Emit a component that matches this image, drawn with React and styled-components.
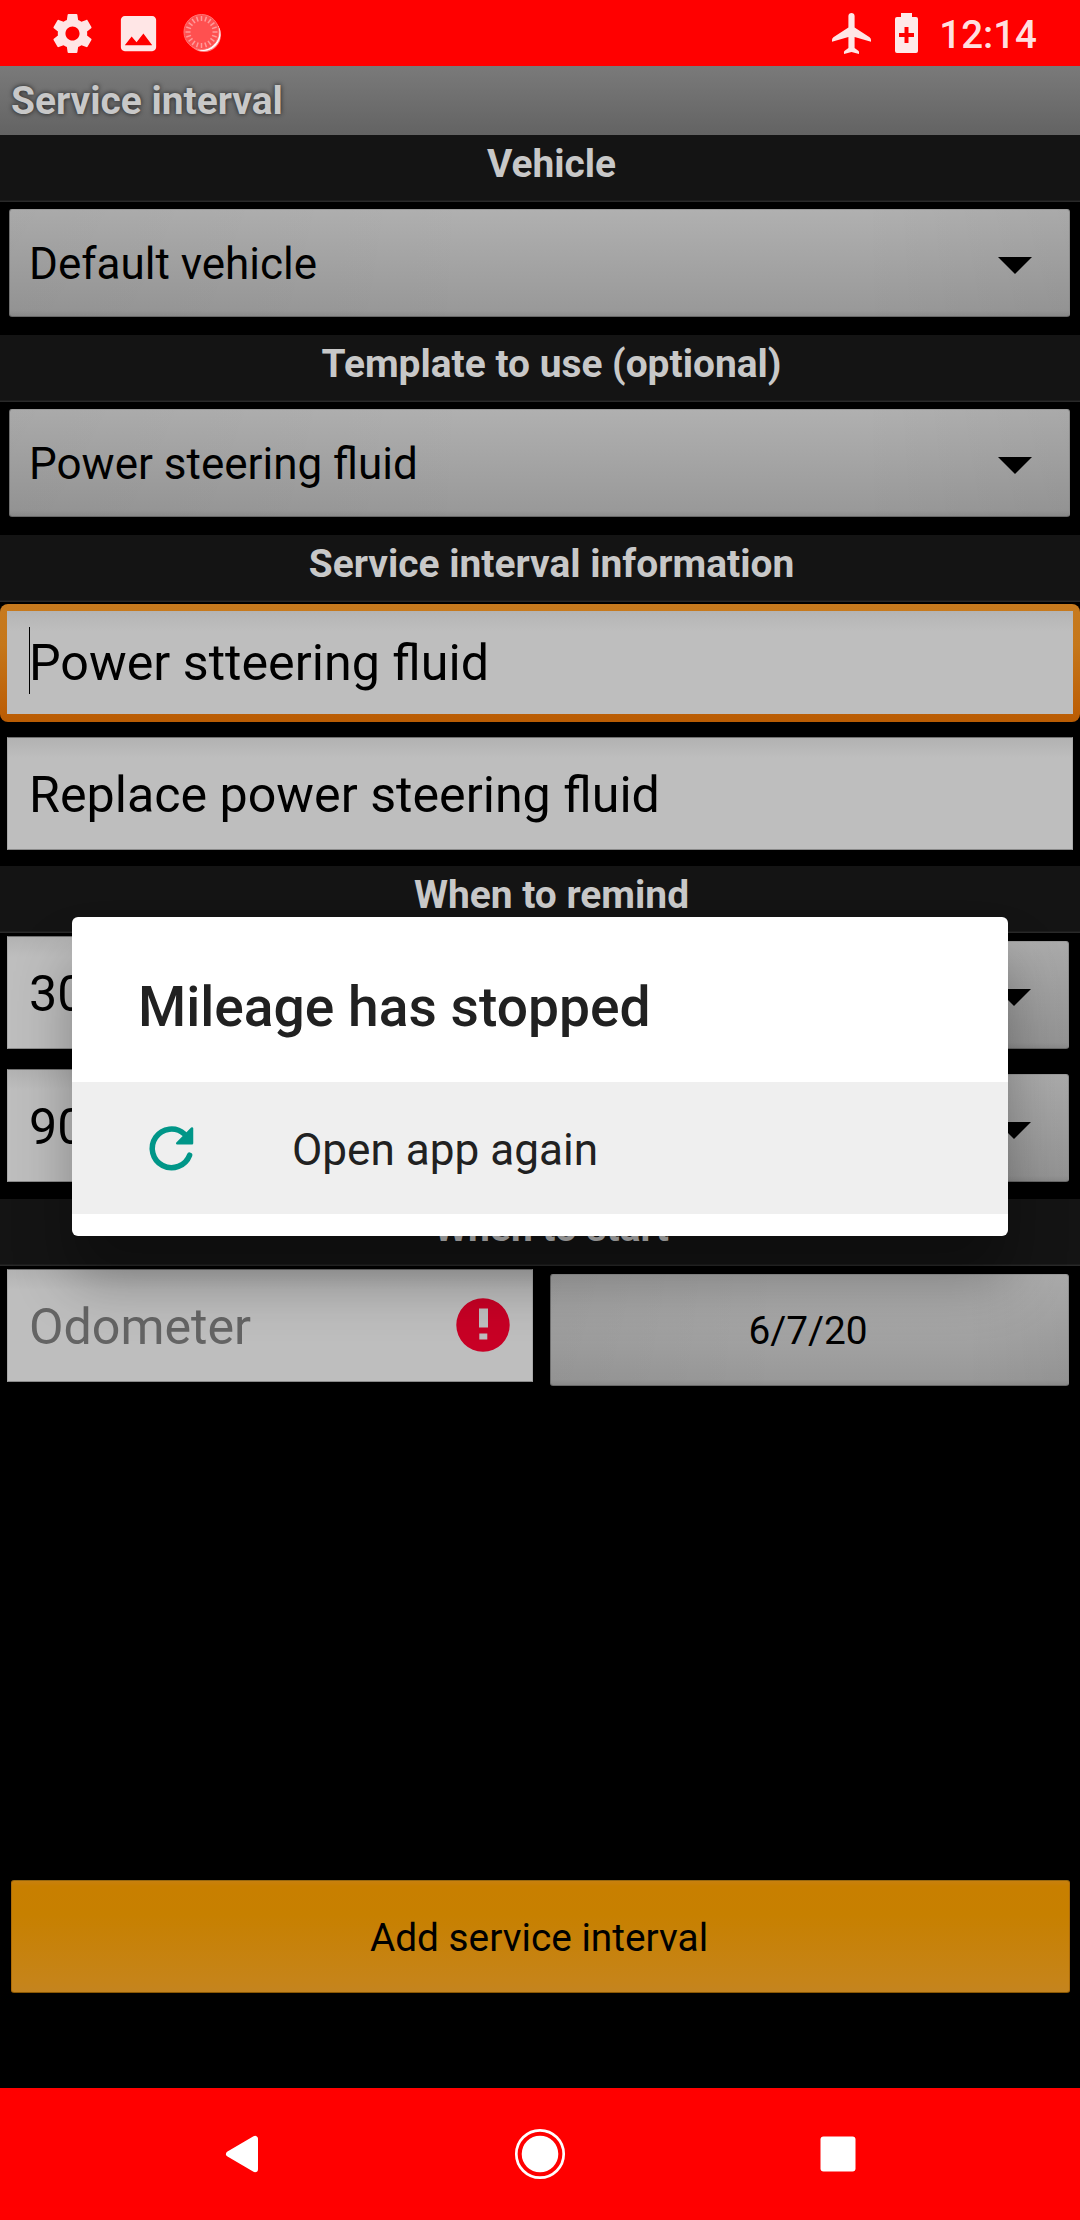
import React from "react";
import styled, { createGlobalStyle, css } from "styled-components";

const GlobalStyle = createGlobalStyle`
  * { box-sizing: border-box; }
  html, body { margin: 0; padding: 0; background: #000; }
  body { font-family: Roboto, "Liberation Sans", sans-serif; }
`;

const Screen = styled.div`
  position: relative;
  width: 1080px;
  height: 2220px;
  display: flex;
  flex-direction: column;
  background: #000;
  color: #000;
  overflow: hidden;
`;

const StatusBar = styled.header`
  flex: none;
  height: 66px;
  display: flex;
  align-items: center;
  justify-content: space-between;
  padding: 0 43px 0 49px;
  background: #ff0000;
`;

const StatusGroup = styled.div`
  display: flex;
  align-items: center;
  gap: ${(p) => p.$gap}px;
`;

const Icon = styled.svg`
  flex: none;
  display: block;
  width: ${(p) => p.$w}px;
  height: ${(p) => p.$h || p.$w}px;
`;

const Clock = styled.span`
  margin-left: -2px;
  font-size: 38.5px;
  font-weight: 500;
  line-height: 66px;
  padding-top: 3px;
  color: rgba(255, 255, 255, 0.9);
`;

const TitleBar = styled.h1`
  flex: none;
  margin: 0;
  height: 69px;
  padding-left: 11px;
  background: linear-gradient(#7a7a7a, #636363);
  color: #c8c8c8;
  font-size: 38.9px;
  font-weight: 700;
  line-height: 70px;
  text-shadow: 0 0 5px rgba(0, 0, 0, 0.75);
`;

const SectionHeader = styled.h2`
  flex: none;
  margin: 0;
  height: 67px;
  padding-left: 23px;
  background: #141414;
  box-shadow: inset 0 -1px #292929, inset 0 -2px #1d1d1d;
  color: #c8c8c8;
  font-size: 38.9px;
  font-weight: 700;
  line-height: 58px;
  text-align: center;
`;

const Body = styled.div`
  flex: none;
  display: flex;
  flex-direction: column;
  padding: ${(p) => p.$pad};
  gap: ${(p) => p.$gap || 0}px;
`;

const Row = styled.div`
  display: grid;
  grid-template-columns: 526px 519px;
  column-gap: 17px;
  align-items: ${(p) => p.$align || "end"};
`;

const raised = css`
  background: linear-gradient(
      90deg,
      rgba(0, 0, 0, 0.04),
      transparent 45%,
      transparent 80%,
      rgba(0, 0, 0, 0.04)
    ),
    linear-gradient(#b0b0b0, #a4a4a4 50%, #999 95%, #8e8e8e);
  border: 1px solid;
  border-color: #9a9a9a #8c8c8c #686868 #707070;
  border-radius: 3px;
`;

const Select = styled.div`
  ${raised}
  display: flex;
  align-items: flex-start;
  justify-content: space-between;
  height: 108px;
  padding: 0 37px 0 19px;
  font-size: 44px;
  line-height: 108px;
`;

const Caret = styled.span`
  width: 0;
  height: 0;
  margin-top: 47px;
  margin-left: auto;
  border: 17px solid transparent;
  border-top-color: #000;
  border-bottom: 0;
`;

const DateButton = styled.button`
  ${raised}
  height: 112px;
  margin: 5px 0 0;
  padding: 2px 3px 0 0;
  color: #000;
  font: 400 38.8px/108px Roboto, "Liberation Sans", sans-serif;
  text-align: center;
`;

const Field = styled.div`
  display: flex;
  align-items: center;
  height: 113px;
  padding: 3px 22px 0 21px;
  background: linear-gradient(#b2b2b2, #b6b6b6 7px, #bebebe 20px, #bebebe);
  border: 1px solid;
  border-color: #707070 #a8a8a8 #8a8a8a #a8a8a8;
  color: ${(p) => (p.$hint ? "#646464" : "#000")};
  font-size: 50.2px;
  line-height: 108px;
  white-space: nowrap;
`;

const FocusRing = styled.div`
  height: 118px;
  padding: 7px;
  border-radius: 8px;
  background: linear-gradient(#c77a1e, #c5771a 35%, #bd6007 88%, #b95c03);
`;

const FocusedField = styled.div`
  display: flex;
  align-items: center;
  height: 103px;
  padding-left: 22px;
  background: linear-gradient(#b4b4b4, #b8b8b8 7px, #bebebe 20px, #bebebe);
  font-size: 50.2px;
  line-height: 107px;
`;

const TextCursor = styled.span`
  width: 1px;
  height: 67px;
  margin-right: -1px;
  margin-bottom: 4px;
  background: #000;
`;

const FieldText = styled.span`
  flex: 1;
`;

const Footer = styled.div`
  flex: 1;
  display: flex;
  flex-direction: column;
  justify-content: flex-end;
  padding: 0 10px 95px 11px;
`;

const PrimaryButton = styled.button`
  height: 113px;
  padding: 0 3px 0 0;
  border: 1px solid;
  border-color: #96670f #ad6c08 #8a5703 #ad6c08;
  border-radius: 3px;
  background: linear-gradient(#c8800f, #c87f00 5px, #c78000 30%, #c68419 90%, #c4841f);
  color: #000;
  font: 400 38.8px/114px Roboto, "Liberation Sans", sans-serif;
`;

const NavBar = styled.nav`
  flex: none;
  height: 132px;
  display: flex;
  align-items: center;
  justify-content: space-between;
  padding: 0 217px;
  background: #ff0000;
`;

const Dialog = styled.section`
  position: absolute;
  left: 72px;
  top: 917px;
  width: 936px;
  height: 319px;
  border-radius: 6px;
  background: #fff;
  color: #212121;
  box-shadow: 0 44px 58px rgba(0, 0, 0, 0.31);
`;

const DialogTitle = styled.h2`
  margin: 0;
  height: 165px;
  padding: 58px 66px 0;
  font-size: 55.15px;
  font-weight: 500;
  line-height: 64px;
`;

const DialogAction = styled.div`
  display: flex;
  align-items: center;
  height: 132px;
  padding-left: 66px;
  gap: 88px;
  background: #efefef;
  font-size: 44.1px;
`;

const ActionLabel = styled.span`
  padding-top: 3px;
`;

const ticks = Array.from({ length: 20 }, (_, i) => i * 18);

function SettingsIcon() {
  return (
    <Icon $w={47} viewBox="0 0 24 24" fill="#ffe6e6">
      <path d="M19.43 12.98c.04-.32.07-.64.07-.98s-.03-.66-.07-.98l2.11-1.65c.19-.15.24-.42.12-.64l-2-3.460c-.12-.22-.39-.3-.61-.22l-2.49 1c-.52-.4-1.080-.73-1.690-.98l-.38-2.650C14.460 2.180 14.250 2 14 2h-4c-.25 0-.46.18-.49.42l-.38 2.650c-.61.25-1.170.59-1.690.98l-2.490-1c-.23-.09-.49 0-.61.22l-2 3.460c-.13.22-.07.49.12.64l2.110 1.650c-.04.32-.07.65-.07.98s.03.66.07.98l-2.110 1.650c-.19.15-.24.42-.12.64l2 3.460c.12.22.39.3.61.22l2.490-1c.52.4 1.080.73 1.690.98l.38 2.650c.03.24.24.42.49.42h4c.25 0 .46-.18.49-.42l.38-2.650c.61-.25 1.170-.59 1.690-.98l2.490 1c.23.09.49 0 .61-.22l2-3.460c.12-.22.07-.49-.12-.64l-2.110-1.650zM12 15.600c-1.980 0-3.600-1.620-3.600-3.600s1.620-3.600 3.600-3.600 3.600 1.620 3.600 3.600-1.620 3.600-3.600 3.600z" />
    </Icon>
  );
}

function PictureIcon() {
  return (
    <Icon $w={47} viewBox="0 0 24 24" fill="#ffe6e6">
      <path d="M21 19V5c0-1.1-.9-2-2-2H5c-1.1 0-2 .9-2 2v14c0 1.1.9 2 2 2h14c1.1 0 2-.9 2-2zM8.500 13.500l2.500 3.010L14.500 12l4.500 6H5l3.500-4.500z" />
    </Icon>
  );
}

function DialIcon() {
  return (
    <Icon $w={42} viewBox="0 0 42 42">
      <circle cx="23" cy="23" r="17" fill="#ff8080" />
      <path
        d="M37 14A17.500 17.500 0 0 1 17 37.500 16.500 16.500 0 0 0 37 14Z"
        fill="#fff"
        stroke="#fff"
        strokeWidth="1"
      />
      <circle cx="20.500" cy="20" r="17.500" fill="#ff5050" stroke="#ff7474" strokeWidth="1" />
      {ticks.map((a) => (
        <path key={a} d="M20.500 4V9" stroke="#ff9a9a" strokeWidth="1.500" transform={`rotate(${a} 20.500 20)`} />
      ))}
    </Icon>
  );
}

function AirplaneIcon() {
  return (
    <Icon $w={41} $h={43} viewBox="0 0 41 43" fill="#ffe6e6">
      <path d="M20.500 1C22.200 1 23.600 2.300 23.600 4V15.600L38.600 25.200Q40 26.200 40 28V29.800L23.600 25V36L27.600 39Q28.300 39.700 28 42L20.500 40 13 42Q12.700 39.700 13.400 39L17.400 36V25L1 29.800V28Q1 26.200 2.400 25.200L17.400 15.600V4C17.400 2.300 18.800 1 20.500 1Z" />
    </Icon>
  );
}

function BatteryIcon() {
  return (
    <Icon $w={23} $h={40} viewBox="0 0 23 40">
      <path
        fillRule="evenodd"
        fill="#ffe9e9"
        d="M6 0H17V4H21Q23 4 23 6V38Q23 40 21 40H2Q0 40 0 38V6Q0 4 2 4H6ZM9.500 14V20H4V24H9.500V30H13.500V24H19V20H13.500V14Z"
      />
    </Icon>
  );
}

const ErrorBadge = styled(Icon)`
  margin-bottom: 4px;
`;

function ErrorIcon() {
  return (
    <ErrorBadge $w={54} viewBox="0 0 54 54">
      <path
        fillRule="evenodd"
        fill="#c80025"
        d="M27 .3A26.700 26.700 0 1 0 27 53.700 26.700 26.700 0 1 0 27 .3ZM23 10.500H32V29.500H23ZM23.300 35.500H31.300V41.500H23.300Z"
      />
    </ErrorBadge>
  );
}

function RestartIcon() {
  return (
    <Icon $w={66} viewBox="0 0 66 66">
      <path
        d="M51.600 40.200A19.300 19.300 0 1 1 46.400 19"
        fill="none"
        stroke="#009688"
        strokeWidth="5.500"
        strokeLinecap="round"
      />
      <path
        d="M54 13.500V28.300H39.200Z"
        fill="#009688"
        stroke="#009688"
        strokeWidth="2.500"
        strokeLinejoin="round"
      />
    </Icon>
  );
}

export default function App() {
  return (
    <Screen>
      <GlobalStyle />
      <StatusBar>
        <StatusGroup $gap={19}>
          <SettingsIcon />
          <PictureIcon />
          <DialIcon />
        </StatusGroup>
        <StatusGroup $gap={23}>
          <AirplaneIcon />
          <BatteryIcon />
          <Clock>12:14</Clock>
        </StatusGroup>
      </StatusBar>
      <TitleBar>Service interval</TitleBar>

      <SectionHeader>Vehicle</SectionHeader>
      <Body $pad="7px 10px 18px 9px">
        <Select>
          Default vehicle
          <Caret />
        </Select>
      </Body>

      <SectionHeader>Template to use (optional)</SectionHeader>
      <Body $pad="7px 10px 18px 9px">
        <Select>
          Power steering fluid
          <Caret />
        </Select>
      </Body>

      <SectionHeader>Service interval information</SectionHeader>
      <Body $pad="2px 0 0">
        <FocusRing>
          <FocusedField>
            <TextCursor />
            <FieldText>Power stteering fluid</FieldText>
          </FocusedField>
        </FocusRing>
      </Body>
      <Body $pad="15px 7px 16px">
        <Field>Replace power steering fluid</Field>
      </Body>

      <SectionHeader>When to remind</SectionHeader>
      <Body $pad="3px 11px 17px 7px" $gap={20}>
        <Row>
          <Field>30</Field>
          <Select>
            <Caret />
          </Select>
        </Row>
        <Row>
          <Field>90</Field>
          <Select>
            <Caret />
          </Select>
        </Row>
      </Body>

      <SectionHeader>When to start</SectionHeader>
      <Body $pad="3px 11px 0 7px">
        <Row $align="start">
          <Field $hint>
            <FieldText>Odometer</FieldText>
            <ErrorIcon />
          </Field>
          <DateButton>6/7/20</DateButton>
        </Row>
      </Body>

      <Footer>
        <PrimaryButton>Add service interval</PrimaryButton>
      </Footer>

      <NavBar>
        <Icon $w={50} viewBox="0 0 50 50">
          <path d="M12 25 38 9.800V40.200Z" fill="#fff" stroke="#fff" strokeWidth="6" strokeLinejoin="round" />
        </Icon>
        <Icon $w={52} viewBox="0 0 52 52">
          <circle cx="26" cy="26" r="23.700" fill="none" stroke="#fff" strokeWidth="2.700" />
          <circle cx="26" cy="26" r="18.300" fill="#fff" />
        </Icon>
        <Icon $w={50} viewBox="0 0 50 50">
          <rect x="7.500" y="7.500" width="35" height="35" rx="3" fill="#fff" />
        </Icon>
      </NavBar>

      <Dialog>
        <DialogTitle>Mileage has stopped</DialogTitle>
        <DialogAction>
          <RestartIcon />
          <ActionLabel>Open app again</ActionLabel>
        </DialogAction>
      </Dialog>
    </Screen>
  );
}
